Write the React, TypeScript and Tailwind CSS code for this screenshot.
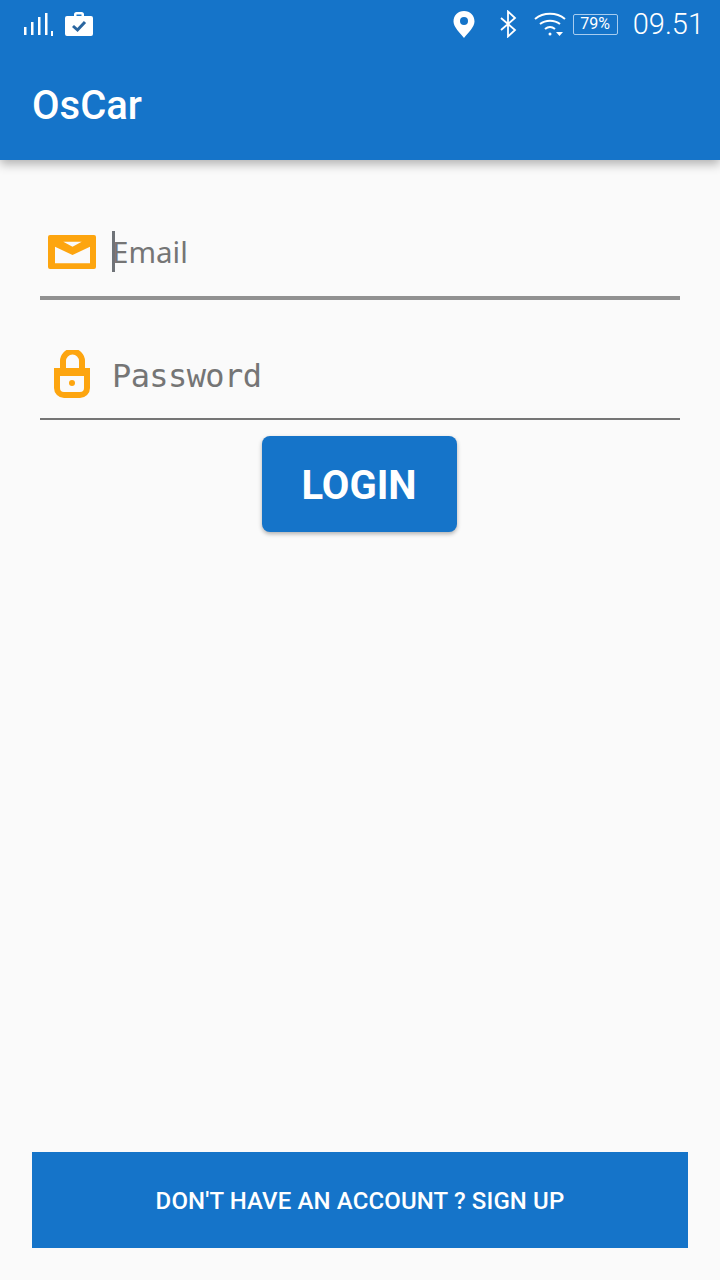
function StatusBar() {
  return (
    <div className="h-12 flex items-center justify-between pl-6 pr-4">
      <div className="flex items-center gap-[9px]">
        <svg width="31" height="24" viewBox="0 0 31 24" fill="white">
          <rect x="0" y="15" width="2.500" height="8" />
          <rect x="7" y="10" width="2.500" height="13" />
          <rect x="14" y="5" width="2.500" height="18" />
          <rect x="21" y="1" width="2.500" height="22" />
          <rect x="27" y="19" width="2" height="6" />
        </svg>
        <svg width="30" height="28" viewBox="0 0 30 28">
          <path d="M10 6V4.500A2.500 2.500 0 0 1 12.500 2h5A2.500 2.500 0 0 1 20 4.500V6h7a2 2 0 0 1 2 2v16a2 2 0 0 1-2 2H3a2 2 0 0 1-2-2V8a2 2 0 0 1 2-2zm2.500 0h5V4.500h-5z" fill="white" fillRule="evenodd" />
          <path d="M9 16l4.500 4 7.500-8" fill="none" stroke="#2a659f" strokeWidth="3" />
        </svg>
      </div>
      <div className="flex items-center">
        <svg width="24" height="30" viewBox="0 0 24 30" className="mr-[23px] mt-[2px]">
          <path d="M12 1C5.800 1 1.500 5.600 1.500 11.500 1.500 17 8 23 12 28c4-5 10.500-11 10.500-16.500C22.500 5.600 18.200 1 12 1z" fill="white" />
          <circle cx="12" cy="11" r="4" fill="#1574c9" />
        </svg>
        <svg width="18" height="28" viewBox="0 0 18 28" fill="none" stroke="white" strokeWidth="1.800" className="mr-[17px]">
          <path d="M2 8l14 12-7 6.500V1.500L16 8 2 20" />
        </svg>
        <svg width="32" height="26" viewBox="0 0 32 26" fill="none" stroke="white" strokeWidth="2" className="mr-[7px]">
          <path d="M1 8c8.500-7 21.500-7 30 0" />
          <path d="M6 13c5.500-4.500 14.500-4.500 20 0" />
          <path d="M11 18c3-2.500 7-2.500 10 0" />
          <circle cx="16" cy="23" r="1.500" fill="white" stroke="none" />
          <path d="M22 21h7l-3.500 4z" fill="white" stroke="none" />
        </svg>
        <div className="w-[45px] h-[21px] border border-[#a8cdef] rounded-[2px] flex items-center justify-center text-[16px] leading-none text-white mr-[15px]">
          79%
        </div>
        <span className="text-[29px] leading-none text-white font-light">09.51</span>
      </div>
    </div>
  );
}

export default function App() {
  return (
    <div className="w-[720px] h-[1280px] bg-[#fafafa] flex flex-col font-['Roboto',sans-serif]">
      <header className="h-40 bg-[#1574c9] shadow-[0_4px_10px_rgba(0,0,0,0.3)]">
        <StatusBar />
        <h1 className="h-[112px] pl-8 pt-1 flex items-center text-[40px] font-medium leading-none text-white">OsCar</h1>
      </header>

      <main className="flex-1 flex flex-col px-10 pt-[52px]">
        <div className="h-[88px] pb-1 flex items-center border-b-4 border-[#919191]">
          <svg width="48" height="34" viewBox="0 0 48 34" className="ml-2 shrink-0">
            <path d="M2 0h44a2 2 0 0 1 2 2v30a2 2 0 0 1-2 2H2a2 2 0 0 1-2-2V2a2 2 0 0 1 2-2zm13.300 6.700h18.400L24.500 11.700zM7 11.700V28.300h35V11.700L24.500 20z" fill="#fda50f" fillRule="evenodd" />
          </svg>
          <div className="ml-4 relative flex items-center">
            <span className="absolute left-0 -top-[6px] w-[3px] h-[41px] bg-[#6f7378]" />
            <span className="text-[29.500px] leading-none text-[#757575] font-['Noto_Sans',sans-serif]">Email</span>
          </div>
        </div>

        <div className="h-[88px] mt-8 flex items-center border-b-2 border-[#757575]">
          <svg width="36" height="48" viewBox="0 0 36 48" className="ml-[14px] -mt-[2px] shrink-0">
            <path d="M9 20v-9a9.500 9.500 0 0 1 19 0v9" fill="none" stroke="#fda50f" strokeWidth="6" />
            <path fillRule="evenodd" fill="#fda50f" d="M0 18h36v20a10 10 0 0 1-10 10H10A10 10 0 0 1 0 38zm6 8v12a4 4 0 0 0 4 4h16a4 4 0 0 0 4-4V26z" />
            <circle cx="18" cy="33" r="3" fill="#fda50f" />
          </svg>
          <span className="ml-[22px] mt-[2px] text-[32px] leading-none text-[#757575] font-['DejaVu_Sans_Mono',monospace] tracking-[-0.6px]">Password</span>
        </div>

        <button className="self-center w-[195px] h-24 pt-[3px] mt-4 mr-[2px] rounded-lg bg-[#1574c9] text-white text-[40px] font-bold shadow-[0_2px_4px_rgba(0,0,0,0.3)]">
          LOGIN
        </button>
      </main>

      <div className="px-8 pb-8">
        <button className="w-full h-24 pt-[2px] bg-[#1574c9] text-white text-[24px] font-medium tracking-[0.13px]">
          DON'T HAVE AN ACCOUNT ? SIGN UP
        </button>
      </div>
    </div>
  );
}
